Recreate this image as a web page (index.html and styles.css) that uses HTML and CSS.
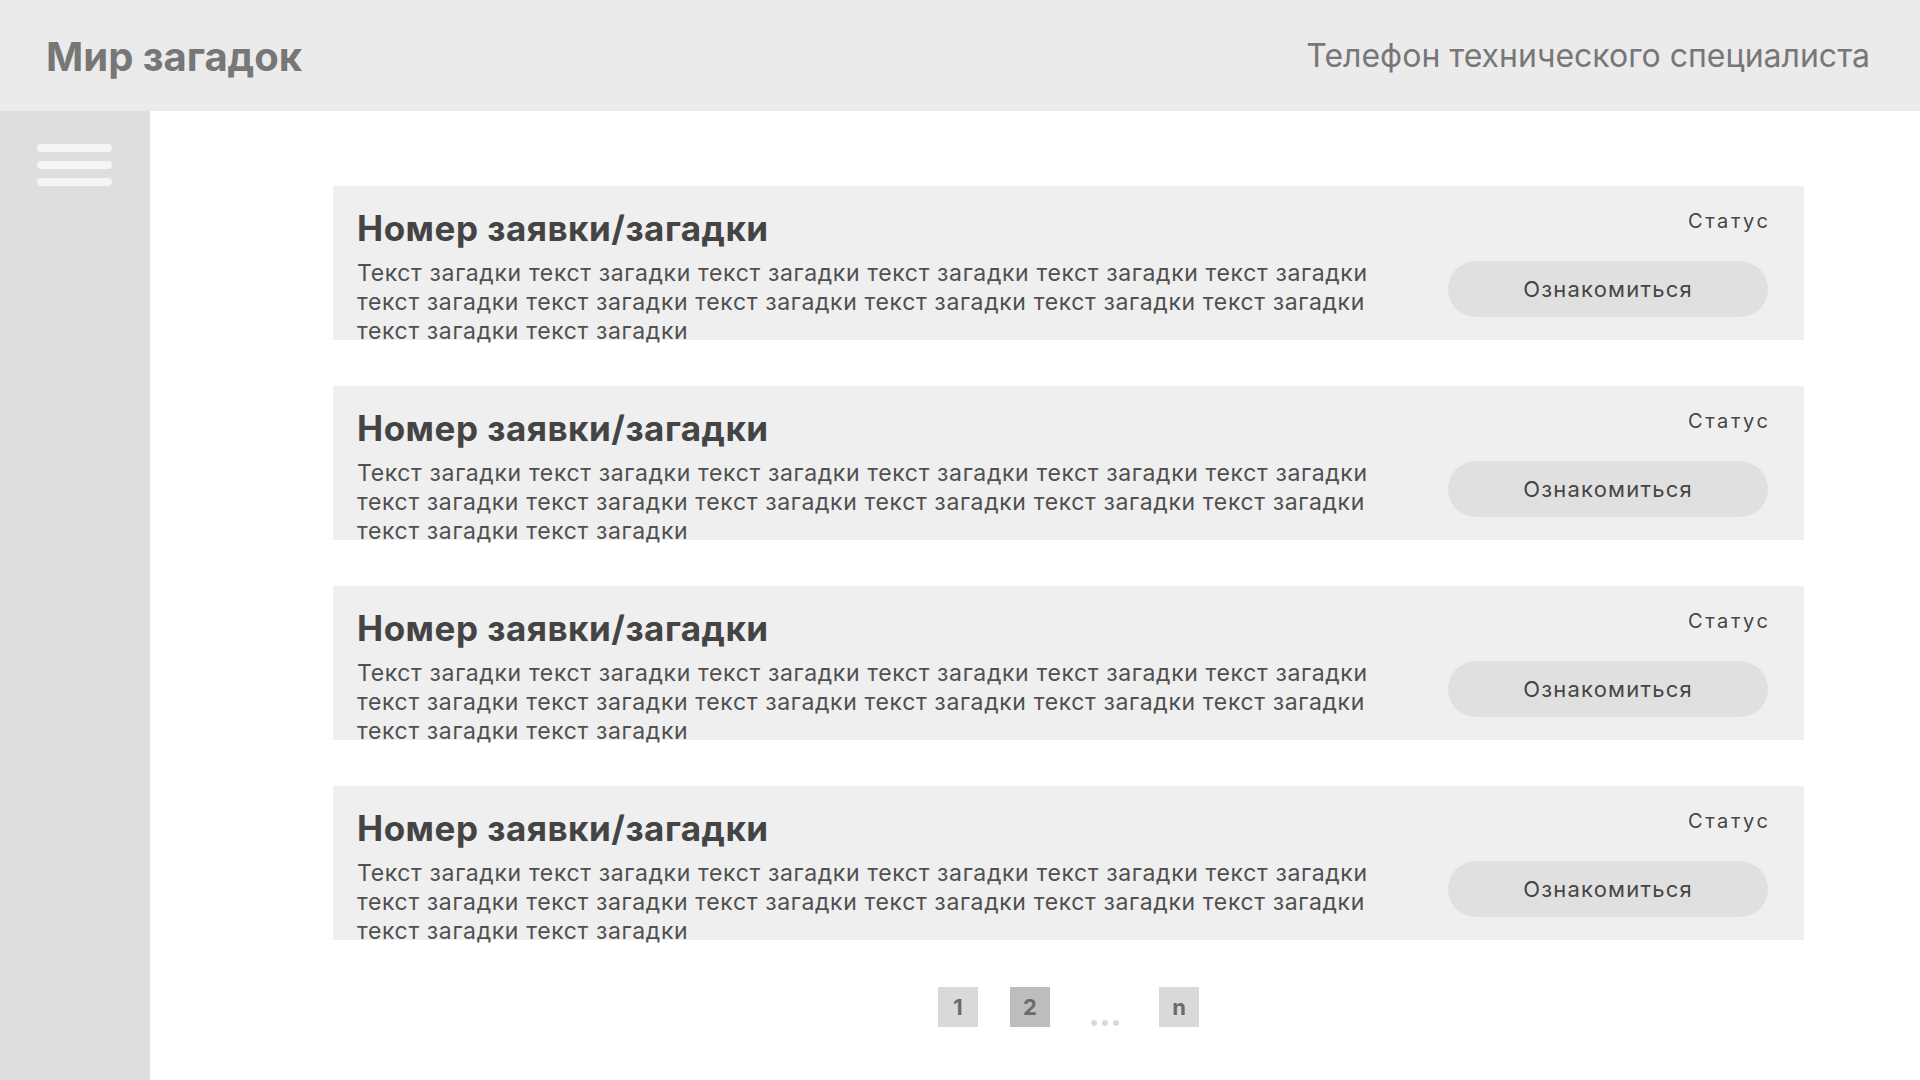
FILE: index.html
```html
<!DOCTYPE html>
<html lang="ru">
<head>
<meta charset="utf-8">
<title>Мир загадок</title>
<link rel="stylesheet" href="styles.css">
</head>
<body>
<header class="topbar">
  <div class="brand">Мир загадок</div>
  <div class="phone">Телефон технического специалиста</div>
</header>
<div class="layout">
  <aside class="sidebar">
    <div class="burger"><span></span><span></span><span></span></div>
  </aside>
  <main class="content">
    <div class="list">
      <article class="card">
        <div class="card-main">
          <h2 class="card-title">Номер заявки/загадки</h2>
          <p class="card-text">Текст загадки текст загадки текст загадки текст загадки текст загадки текст загадки текст загадки текст загадки текст загадки текст загадки текст загадки текст загадки текст загадки текст загадки</p>
        </div>
        <div class="card-side">
          <div class="status">Статус</div>
          <button class="btn">Ознакомиться</button>
        </div>
      </article>
      <article class="card">
        <div class="card-main">
          <h2 class="card-title">Номер заявки/загадки</h2>
          <p class="card-text">Текст загадки текст загадки текст загадки текст загадки текст загадки текст загадки текст загадки текст загадки текст загадки текст загадки текст загадки текст загадки текст загадки текст загадки</p>
        </div>
        <div class="card-side">
          <div class="status">Статус</div>
          <button class="btn">Ознакомиться</button>
        </div>
      </article>
      <article class="card">
        <div class="card-main">
          <h2 class="card-title">Номер заявки/загадки</h2>
          <p class="card-text">Текст загадки текст загадки текст загадки текст загадки текст загадки текст загадки текст загадки текст загадки текст загадки текст загадки текст загадки текст загадки текст загадки текст загадки</p>
        </div>
        <div class="card-side">
          <div class="status">Статус</div>
          <button class="btn">Ознакомиться</button>
        </div>
      </article>
      <article class="card">
        <div class="card-main">
          <h2 class="card-title">Номер заявки/загадки</h2>
          <p class="card-text">Текст загадки текст загадки текст загадки текст загадки текст загадки текст загадки текст загадки текст загадки текст загадки текст загадки текст загадки текст загадки текст загадки текст загадки</p>
        </div>
        <div class="card-side">
          <div class="status">Статус</div>
          <button class="btn">Ознакомиться</button>
        </div>
      </article>
    </div>
    <nav class="pager">
      <span class="page">1</span>
      <span class="page active">2</span>
      <span class="dots"><i></i><i></i><i></i></span>
      <span class="page">n</span>
    </nav>
  </main>
</div>
</body>
</html>
```
FILE: styles.css
```css
* { box-sizing: border-box; }
html, body { margin: 0; padding: 0; }
body {
  font-family: Inter, "Noto Sans", sans-serif;
  background: #ffffff;
  width: 1920px;
  height: 1080px;
  overflow: hidden;
}
.topbar {
  height: 111px;
  background: #ebebeb;
  display: flex;
  align-items: center;
  justify-content: space-between;
  padding: 0 50px 0 46px;
}
.brand {
  font-size: 40px;
  font-weight: 700;
  color: #777777;
  margin-top: 2px;
}
.phone {
  font-size: 32px;
  font-weight: 400;
  color: #777777;
  margin-top: 0;
}
.layout {
  display: flex;
  height: 969px;
}
.sidebar {
  width: 150px;
  flex: none;
  background: #dedede;
  padding: 33px 0 0 37px;
}
.burger {
  display: flex;
  flex-direction: column;
  gap: 9px;
  width: 75px;
}
.burger span {
  display: block;
  height: 8px;
  border-radius: 4px;
  background: #f5f5f5;
}
.content {
  flex: 1;
  padding: 75px 116px 0 183px;
}
.list {
  display: flex;
  flex-direction: column;
  gap: 46px;
}
.card {
  background: #efefef;
  height: 154px;
  display: flex;
  justify-content: space-between;
  padding: 21px 36px 0 24px;
}
.card-main { width: 1060px; }
.card-title {
  margin: 0;
  font-size: 35px;
  font-weight: 700;
  letter-spacing: 0.5px;
  color: #444444;
  line-height: 42px;
}
.card-text {
  margin: 10px 0 0;
  font-size: 23px;
  letter-spacing: 0.64px;
  line-height: 29px;
  color: #505050;
}
.card-side {
  display: flex;
  flex-direction: column;
  align-items: flex-end;
}
.status {
  font-size: 20px;
  letter-spacing: 2.6px;
  line-height: 24px;
  color: #454545;
  margin-top: 2px;
  margin-right: -2.6px;
}
.btn {
  margin-top: 28px;
  width: 320px;
  height: 56px;
  border: none;
  border-radius: 28px;
  background: #e0e0e0;
  font-family: Inter, "Noto Sans", sans-serif;
  font-size: 22px;
  letter-spacing: 1.2px;
  color: #454545;
  padding: 0;
}
.pager {
  display: flex;
  justify-content: center;
  align-items: flex-end;
  gap: 32px;
  margin-top: 47px;
}
.page {
  width: 40px;
  height: 40px;
  background: #d9d9d9;
  color: #6b6b6b;
  font-weight: 700;
  font-size: 22px;
  display: flex;
  align-items: center;
  justify-content: center;
}
.page.active { background: #bdbdbd; }
.dots {
  width: 45px;
  display: flex;
  justify-content: center;
  gap: 5px;
  padding-bottom: 1px;
}
.dots i {
  display: block;
  width: 6px;
  height: 6px;
  border-radius: 50%;
  background: #d9d9d9;
}
```
